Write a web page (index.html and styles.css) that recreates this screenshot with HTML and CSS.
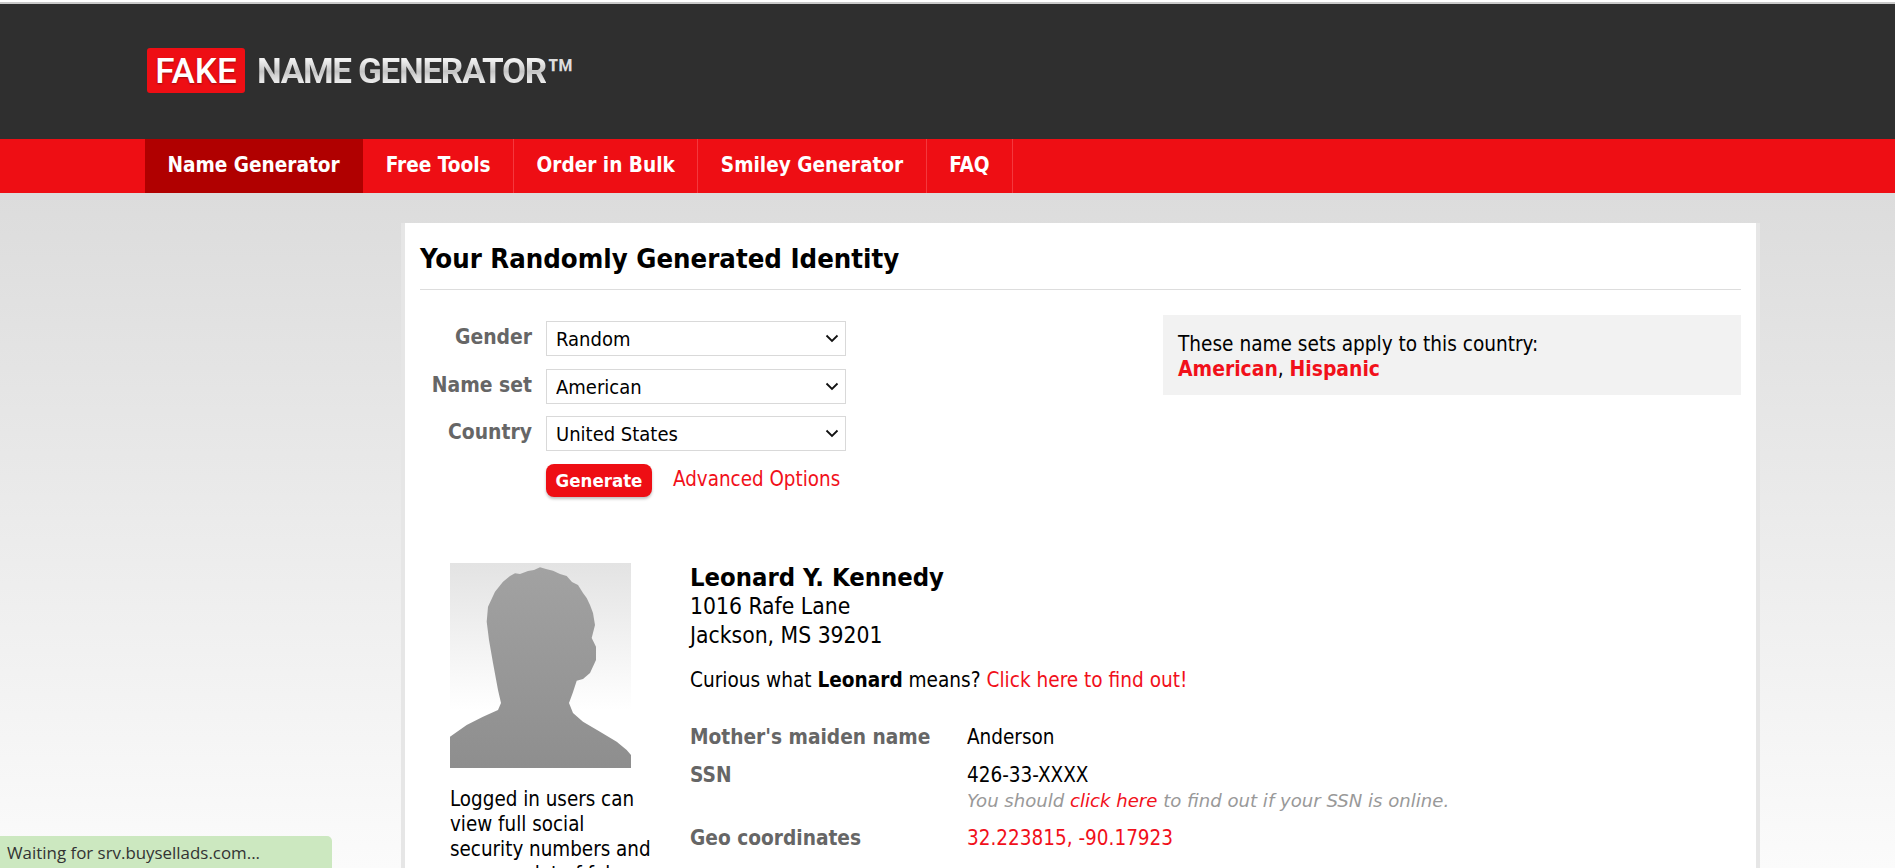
FILE: index.html
```html
<!DOCTYPE html>
<html lang="en">
<head>
<meta charset="utf-8">
<title>Fake Name Generator</title>
<link rel="stylesheet" href="styles.css">
</head>
<body>
<header class="masthead">
  <div class="logo">
    <span class="logo-fake">FAKE</span>
    <span class="logo-name">NAME GENERATOR</span>
    <span class="logo-tm">™</span>
  </div>
</header>
<nav class="nav">
  <a class="nav-item is-active">Name Generator</a>
  <a class="nav-item">Free Tools</a>
  <a class="nav-item">Order in Bulk</a>
  <a class="nav-item">Smiley Generator</a>
  <a class="nav-item">FAQ</a>
</nav>
<main class="page">
  <section class="card">
    <h1 class="title">Your Randomly Generated Identity</h1>
    <div class="top-row">
      <form class="form">
        <label class="form-label">Gender</label>
        <div class="select-wrap">
          <select class="select"><option>Random</option></select>
          <svg class="chevron" viewBox="0 0 14 9"><path d="M1.5 1.5 7 7l5.5-5.5" fill="none" stroke="#111" stroke-width="1.8"/></svg>
        </div>
        <label class="form-label">Name set</label>
        <div class="select-wrap">
          <select class="select"><option>American</option></select>
          <svg class="chevron" viewBox="0 0 14 9"><path d="M1.5 1.5 7 7l5.5-5.5" fill="none" stroke="#111" stroke-width="1.8"/></svg>
        </div>
        <label class="form-label">Country</label>
        <div class="select-wrap">
          <select class="select"><option>United States</option></select>
          <svg class="chevron" viewBox="0 0 14 9"><path d="M1.5 1.5 7 7l5.5-5.5" fill="none" stroke="#111" stroke-width="1.8"/></svg>
        </div>
        <div class="form-actions">
          <button class="generate" type="button">Generate</button>
          <a class="link advanced">Advanced Options</a>
        </div>
      </form>
      <aside class="notice">
        These name sets apply to this country:<br>
        <a class="link strong">American</a>, <a class="link strong">Hispanic</a>
      </aside>
    </div>
    <div class="profile">
      <div class="photo-col">
        <svg class="photo" viewBox="0 0 181 205" preserveAspectRatio="none">
          <defs>
            <linearGradient id="photoBg" x1="0" y1="0" x2="0" y2="1">
              <stop offset="0" stop-color="#e3e3e3"/>
              <stop offset="0.72" stop-color="#ffffff"/>
              <stop offset="1" stop-color="#ffffff"/>
            </linearGradient>
            <linearGradient id="photoFg" x1="0" y1="0" x2="0" y2="1">
              <stop offset="0" stop-color="#a2a2a2"/>
              <stop offset="1" stop-color="#8e8e8e"/>
            </linearGradient>
          </defs>
          <rect width="181" height="205" fill="url(#photoBg)"/>
          <path class="silhouette" fill="url(#photoFg)" d="M0 173.7L16.7 162 33 153.7 48 147 51 140 48 127 43 100 39 77 36.7 58.7 38 43.7 45 28.7 53 18.7 60 13 65 10.3 70 11 78 8 84 7 90 4.3 96 6 103 7.7 110 11 116.7 13 122 19 128 22 133 30 136.7 35 140 42 143 50 145 62 141.7 75 146 83.7 146 97 140 110 133 116 126.7 117.7 122.7 130 119 140 123 150 133 158.7 150 168.7 166.7 178.7 176.7 187 181 192V205H0Z"/>
        </svg>
        <p class="photo-note">Logged in users can view full social security numbers and access a lot of fake names.</p>
      </div>
      <div class="details">
        <h2 class="person-name">Leonard Y. Kennedy</h2>
        <div class="address">1016 Rafe Lane<br>Jackson, MS 39201</div>
        <p class="curious">Curious what <b>Leonard</b> means? <a class="link">Click here to find out!</a></p>
        <dl class="facts">
          <dt class="fact-key">Mother's maiden name</dt>
          <dd class="fact-val">Anderson</dd>
          <dt class="fact-key">SSN</dt>
          <dd class="fact-val">426-33-XXXX
            <div class="hint">You should <a class="link">click here</a> to find out if your SSN is online.</div>
          </dd>
          <dt class="fact-key">Geo coordinates</dt>
          <dd class="fact-val"><a class="link">32.223815, -90.17923</a></dd>
        </dl>
      </div>
    </div>
  </section>
</main>
<div class="status">Waiting for srv.buysellads.com...</div>
</body>
</html>
```
FILE: styles.css
```css
* { box-sizing: border-box; }
html, body { height: 100%; overflow: hidden; }
body {
  margin: 0;
  padding-top: 2px;
  background: #fff;
  color: #000;
  font-family: "DejaVu Sans", sans-serif;
  font-stretch: condensed;
  font-size: 20.5px;
  line-height: 25px;
}
.masthead {
  height: 137px;
  background: #2f2f2f;
  border-top: 2px solid #c9c9c9;
  padding: 44px 0 0 147px;
}
.logo {
  display: flex;
  align-items: flex-start;
  font-family: Roboto, sans-serif;
  font-stretch: normal;
  font-size: 35px;
  line-height: 47px;
}
.logo-fake {
  width: 98px;
  height: 45px;
  background: #ee0e14;
  border-radius: 3px;
  color: #fff;
  font-weight: 500;
  text-align: center;
  text-shadow: 0 1px 2px rgba(0,0,0,.35);
}
.logo-name {
  margin-left: 12px;
  font-weight: 700;
  letter-spacing: -1.3px;
  background: linear-gradient(#f2f2f2 25%, #c4c4c4 50%, #efefef 75%);
  -webkit-background-clip: text;
  background-clip: text;
  color: transparent;
}
.logo-tm {
  margin: 8px 0 0 0;
  color: #ddd;
  font-size: 46px;
  font-weight: 500;
  line-height: 40px;
}
.nav {
  display: flex;
  height: 54px;
  padding-left: 145px;
  background: #ee0e14;
}
.nav-item {
  padding: 0 22.5px;
  border-right: 1px solid #f4383d;
  color: #fff;
  font-size: 20.6px;
  font-weight: 700;
  line-height: 52px;
}
.nav-item.is-active { background: #b00000; border-right-color: #b00000; }
.page {
  height: 675px;
  padding: 30px 0 0 401px;
  background: linear-gradient(#dcdcdc, #fbfbfb);
}
.card {
  width: 1359px;
  height: 800px;
  padding: 0 15px;
  background: #fff;
  border: solid #e6e6e6;
  border-width: 0 4px;
}
.title {
  height: 67px;
  margin: 0;
  border-bottom: 1px solid #ddd;
  font-size: 27.3px;
  font-weight: 700;
  line-height: 72px;
}
.top-row {
  display: flex;
  justify-content: space-between;
  align-items: flex-start;
  padding-top: 25px;
}
.form {
  display: grid;
  grid-template-columns: 112px 300px;
  column-gap: 14px;
  row-gap: 12.5px;
  padding-top: 6px;
}
.form-label {
  color: #666;
  font-weight: 700;
  font-size: 20.9px;
  text-align: right;
  line-height: 32px;
}
.select-wrap { position: relative; height: 35px; }
.select {
  appearance: none;
  width: 100%;
  height: 35px;
  padding: 2px 9px 0;
  background: #fff;
  border: 1px solid #d9d9d9;
  border-radius: 0;
  color: #000;
  font: inherit;
  font-size: 20px;
}
.chevron {
  position: absolute;
  right: 7px;
  top: 13px;
  width: 14px;
  height: 9px;
}
.form-actions {
  grid-column: 2;
  display: flex;
  align-items: center;
  gap: 21px;
}
.generate {
  width: 106px;
  height: 33px;
  padding: 0;
  background: #ee0e14;
  border: 0;
  border-radius: 8px;
  box-shadow: 0 2px 3px rgba(0,0,0,.25);
  color: #fff;
  font: inherit;
  font-size: 18.5px;
  font-weight: 700;
}
.link { color: #f1101a; }
.advanced { margin-top: -2px; font-size: 20.4px; }
.strong { font-weight: 700; font-size: 20.9px; }
.notice {
  width: 578px;
  height: 80px;
  padding: 17px 15px;
  background: #f2f2f2;
  font-size: 20.6px;
}
.profile {
  display: flex;
  padding: 66px 0 0 30px;
}
.photo-col { width: 205px; margin-right: 35px; }
.photo { display: block; width: 181px; height: 205px; }
.silhouette { filter: blur(.5px); }
.photo-note { margin: 19px 0 0; font-size: 20.4px; }
.details { flex: 1; }
.person-name {
  margin: 0;
  font-size: 25.4px;
  font-weight: 700;
  line-height: 29px;
}
.address { font-size: 22.7px; line-height: 29px; }
.curious { margin: 18px 0 0; font-size: 20.6px; }
.facts {
  display: grid;
  grid-template-columns: 277px 1fr;
  row-gap: 13px;
  margin: 32px 0 0;
}
.fact-key { color: #666; font-weight: 700; font-size: 20.7px; }
.fact-val { margin: 0; }
.hint { color: #999; font-size: 18.1px; font-stretch: normal; font-style: italic; line-height: 25px; }
.status {
  position: fixed;
  left: 0;
  bottom: 0;
  width: 332px;
  height: 32px;
  padding-left: 7px;
  background: #cce8c0;
  border-top-right-radius: 5px;
  color: #333;
  font-family: "Open Sans", sans-serif;
  font-stretch: normal;
  font-size: 16.9px;
  line-height: 34px;
}
```
